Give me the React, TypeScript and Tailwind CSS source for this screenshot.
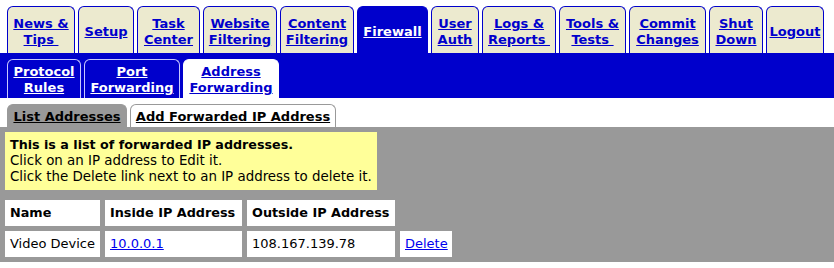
import React from 'react';

const topTabs = [
  { label: ['News &', 'Tips\u00a0'], w: 'w-[68px]' },
  { label: ['Setup'], w: 'w-[56px]' },
  { label: ['Task', 'Center'], w: 'w-[63px]' },
  { label: ['Website', 'Filtering'], w: 'w-[74px]' },
  { label: ['Content', 'Filtering'], w: 'w-[74px]' },
  { label: ['Firewall'], w: 'w-[71px]', active: true },
  { label: ['User', 'Auth'], w: 'w-[48px]' },
  { label: ['Logs &', 'Reports\u00a0'], w: 'w-[74px]' },
  { label: ['Tools &', 'Tests\u00a0'], w: 'w-[67px]' },
  { label: ['Commit', 'Changes'], w: 'w-[77px]' },
  { label: ['Shut', 'Down'], w: 'w-[54px]' },
  { label: ['Logout'], w: 'w-[58px]' },
];

const subTabs = [
  { label: ['Protocol', 'Rules'], w: 'w-[74px]' },
  { label: ['Port', 'Forwarding'], w: 'w-[96px]' },
  { label: ['Address', 'Forwarding'], w: 'w-[96px]', active: true },
];

function Lines({ lines }: { lines: string[] }) {
  return (
    <a href="#" className="underline">
      {lines.map((l, i) => (
        <React.Fragment key={i}>
          {i > 0 && <br />}
          {l}
        </React.Fragment>
      ))}
    </a>
  );
}

export default function App() {
  return (
    <div className="w-[834px] h-[268px] overflow-hidden bg-white font-['DejaVu_Sans',Verdana,sans-serif] text-[13.4px] leading-[16px] text-black">
      {/* main tabs */}
      <div className="flex gap-[3px] pl-[7px] pt-[6px] text-[13px]">
        {topTabs.map((t) => (
          <div
            key={t.label.join()}
            className={`${t.w} h-[47px] pt-[3px] flex items-center justify-center text-center font-bold rounded-t-[6px] border border-b-0 border-[#0000cc] ${
              t.active ? 'bg-[#0000cc] text-white' : 'bg-[#eceacf] text-[#0000cc]'
            }`}
          >
            <Lines lines={t.label} />
          </div>
        ))}
      </div>

      {/* sub tabs */}
      <div className="bg-[#0000cc] h-[45px] flex items-end gap-[3px] pl-[7px] text-[13px]">
        {subTabs.map((t) => (
          <div
            key={t.label.join()}
            className={`${t.w} h-[39px] pt-[4px] text-center font-bold rounded-t-[6px] border border-b-0 ${
              t.active ? 'bg-white border-white text-[#0000cc]' : 'bg-[#0000cc] border-[#c8c8ff] text-white'
            }`}
          >
            <Lines lines={t.label} />
          </div>
        ))}
      </div>

      {/* page tabs */}
      <div className="flex items-end gap-[3px] pl-[7px] pt-[6px] text-[13px]">
        <div className="w-[120px] h-[23px] pt-[2px] flex items-center justify-center font-bold rounded-t-[6px] border border-b-0 border-[#999999] bg-[#999999]">
          <a href="#" className="underline">List Addresses</a>
        </div>
        <div className="w-[206px] h-[23px] pt-[2px] flex items-center justify-center font-bold rounded-t-[6px] border border-b-0 border-[#999999] bg-white">
          <a href="#" className="underline">Add Forwarded IP Address</a>
        </div>
      </div>

      <div className="bg-[#999999] pt-[5px]">
        <div className="ml-[5px] w-fit bg-[#ffff99] p-[5px]">
          <b className="text-[12.7px]">This is a list of forwarded IP addresses.</b>
          <br />
          Click on an IP address to Edit it.
          <br />
          Click the Delete link next to an IP address to delete it.
        </div>

        <table className="mt-[5px] w-[457px] table-fixed border-separate border-spacing-[5px] whitespace-nowrap text-[13px]">
          <colgroup>
            <col className="w-[95px]" />
            <col className="w-[137px]" />
            <col className="w-[148px]" />
            <col className="w-[52px]" />
          </colgroup>
          <tbody>
            <tr className="h-[26px] text-[12.8px]">
              <th className="bg-white px-[5px] text-left font-bold">Name</th>
              <th className="bg-white px-[5px] text-left font-bold">Inside IP Address</th>
              <th className="bg-white px-[5px] text-left font-bold">Outside IP Address</th>
              <th />
            </tr>
            <tr className="h-[26px]">
              <td className="bg-white px-[5px]">Video Device</td>
              <td className="bg-white px-[5px]">
                <a href="#" className="text-[#0000ee] underline">10.0.0.1</a>
              </td>
              <td className="bg-white px-[5px]">108.167.139.78</td>
              <td className="bg-white px-[5px]">
                <a href="#" className="text-[#0000ee] underline">Delete</a>
              </td>
            </tr>
          </tbody>
        </table>
      </div>
    </div>
  );
}
